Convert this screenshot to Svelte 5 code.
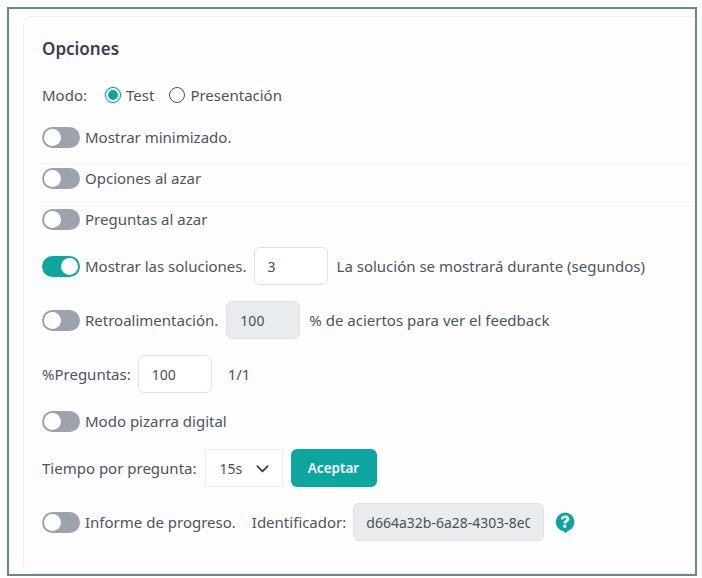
<script>
  const idValue = 'd664a32b-6a28-4303-8e0';
</script>

<div class="frame">
  <section class="card">
    <h2>Opciones</h2>

    <div class="row modo">
      <span class="label">Modo:</span>
      <label class="radio first"><span class="dot on"></span>Test</label>
      <label class="radio"><span class="dot"></span>Presentación</label>
    </div>

    <div class="row t1 sep"><span class="sw"></span><span>Mostrar minimizado.</span></div>
    <div class="row t2 sep two"><span class="sw"></span><span>Opciones al azar</span></div>
    <div class="row t2"><span class="sw"></span><span>Preguntas al azar</span></div>

    <div class="row fld sol">
      <span class="sw on"></span><span>Mostrar las soluciones.</span>
      <span class="input w74 gap">3</span>
      <span class="after">La solución se mostrará durante (segundos)</span>
    </div>

    <div class="row fld next">
      <span class="sw"></span><span>Retroalimentación.</span>
      <span class="input w74 gap retro off">100</span>
      <span class="after">% de aciertos para ver el feedback</span>
    </div>

    <div class="row fld next2">
      <span>%Preguntas:</span>
      <span class="input w74 gap">100</span>
      <span class="count">1/1</span>
    </div>

    <div class="row t3"><span class="sw"></span><span>Modo pizarra digital</span></div>

    <div class="row fld next3">
      <span>Tiempo por pregunta:</span>
      <span class="select">15s
        <svg viewBox="0 0 16 16" width="15" height="15" aria-hidden="true"><path d="M2.5 5.5 8 11l5.5-5.5" fill="none" stroke="#343a40" stroke-width="1.8" stroke-linecap="round" stroke-linejoin="round"/></svg>
      </span>
      <button type="button">Aceptar</button>
    </div>

    <div class="row fld next4">
      <span class="sw"></span><span>Informe de progreso.</span>
      <span class="idl">Identificador:</span>
      <span class="input idv off"><span class="clip">{idValue}</span></span>
      <svg class="help" viewBox="0 0 20 21" width="20" height="21" aria-hidden="true">
        <path d="M10 0.5a9.5 9.5 0 0 1 3.2 18.4L10.5 21l-1.6-1.6A9.5 9.5 0 0 1 10 0.5z" fill="#0ca5a0"/>
        <path d="M5.9 7.5C6.1 4.9 7.9 3.5 10.2 3.5c2.4 0 4.1 1.4 4.1 3.4 0 1.5-.8 2.3-1.9 3-.9.6-1.1.9-1.1 1.7H8.4c0-1.7.5-2.4 1.6-3.2.8-.6 1.3-.9 1.3-1.5 0-.7-.5-1.1-1.2-1.1-.8 0-1.3.6-1.4 1.4z" fill="#fff"/>
        <rect x="8.3" y="12.8" width="3" height="3" rx=".7" fill="#fff"/>
      </svg>
    </div>
  </section>
</div>

<style>
  :global(body) { margin: 0; background: #fff; }
  .frame {
    box-sizing: border-box;
    width: 690px; height: 569px;
    margin: 7px 0 0 7px;
    border: 2px solid #65898c;
    background: #fff;
    padding: 7px 0 0 14px;
    overflow: hidden;
    font-family: "Noto Sans", "Open Sans", sans-serif;
    font-size: 15px;
    color: #4b5563;
  }
  .card {
    box-sizing: border-box;
    height: 558px;
    margin-right: -10px;
    background: #fdfdfd;
    border: 1px solid #eff0f1;
    border-radius: 8px;
    padding: 0 0 0 18px;
  }
  h2 {
    margin: 0;
    padding-top: 21px;
    font-size: 17px; line-height: 22px; font-weight: 600;
    color: #374151;
  }
  .row { display: flex; align-items: center; }
  .modo { margin-top: 23px; height: 24px; }
  .label { margin-right: 18px; }
  .radio { display: flex; align-items: center; gap: 5px; margin-right: 15px; }
  .dot {
    box-sizing: border-box; width: 16px; height: 16px; border-radius: 50%;
    border: 1px solid #4b5563; background: #fff;
  }
  .dot.on { border: 1px solid #0ca5a0; background: #0ca5a0; box-shadow: 0 0 0 1px #c5e8e6; outline: 2px solid #fff; outline-offset: -3px; }
  .t1 { margin-top: 18px; height: 24px; }
  .t2 { height: 24px; margin-top: 17px; }
  .sep { position: relative; }
  .sep::after {
    content: ""; position: absolute; left: -1px; right: 0; bottom: -15px; height: 1px; background: #f5f5f6;
  }
  .sep.two::after { bottom: -16px; }
  .sw {
    box-sizing: border-box; position: relative; display: block;
    width: 38px; height: 21px; border-radius: 11px; background: #9ca3af;
    margin-right: 5px; flex: none;
  }
  .sw::before {
    content: ""; position: absolute; left: 2px; top: 2px; width: 17px; height: 17px; border-radius: 50%; background: #fff;
  }
  .sw.on { background: #0ca5a0; }
  .sw.on::before { left: 19px; }
  .input {
    box-sizing: border-box; display: flex; align-items: center;
    height: 38px; padding: 0 13px; background: #fff;
    border: 1px solid #dee2e6; border-radius: 6px; color: #495057; font-size: 14px;
  }
  .input.off { background: #e9ecef; }
  .w74 { width: 74px; }
  .gap { margin-left: 7px; }
  .retro { margin-left: 8px; }
  .after { margin-left: 9px; }
  .count { margin-left: 16px; }
  .fld { height: 38px; }
  .row.sol { margin-top: 16px; }
  .row.next { margin-top: 16px; }
  .row.next2 { margin-top: 16px; }
  .t3 { margin-top: 16px; height: 24px; }
  .row.next3 { margin-top: 16px; }
  .row.next4 { margin-top: 16px; }
  .select {
    box-sizing: border-box; display: flex; align-items: center; justify-content: space-between;
    width: 78px; height: 38px; margin-left: 8px; padding: 0 12px 0 14px;
    background: #fff; border: 1px solid #e9ecef; border-radius: 4px; font-size: 14px; color: #495057;
  }
  button {
    box-sizing: border-box; margin-left: 8px; width: 86px; height: 38px;
    background: #0ca5a0; color: #fff; border: 0; border-radius: 6px;
    font: 600 13.5px "Noto Sans", sans-serif;
  }
  .idl { margin-left: 16px; }
  .idv { width: 191px; margin-left: 7px; padding: 0 0 0 12px; }
  .clip { display: block; width: 164px; overflow: hidden; white-space: nowrap; }
  .help { margin-left: 11px; flex: none; }
</style>
